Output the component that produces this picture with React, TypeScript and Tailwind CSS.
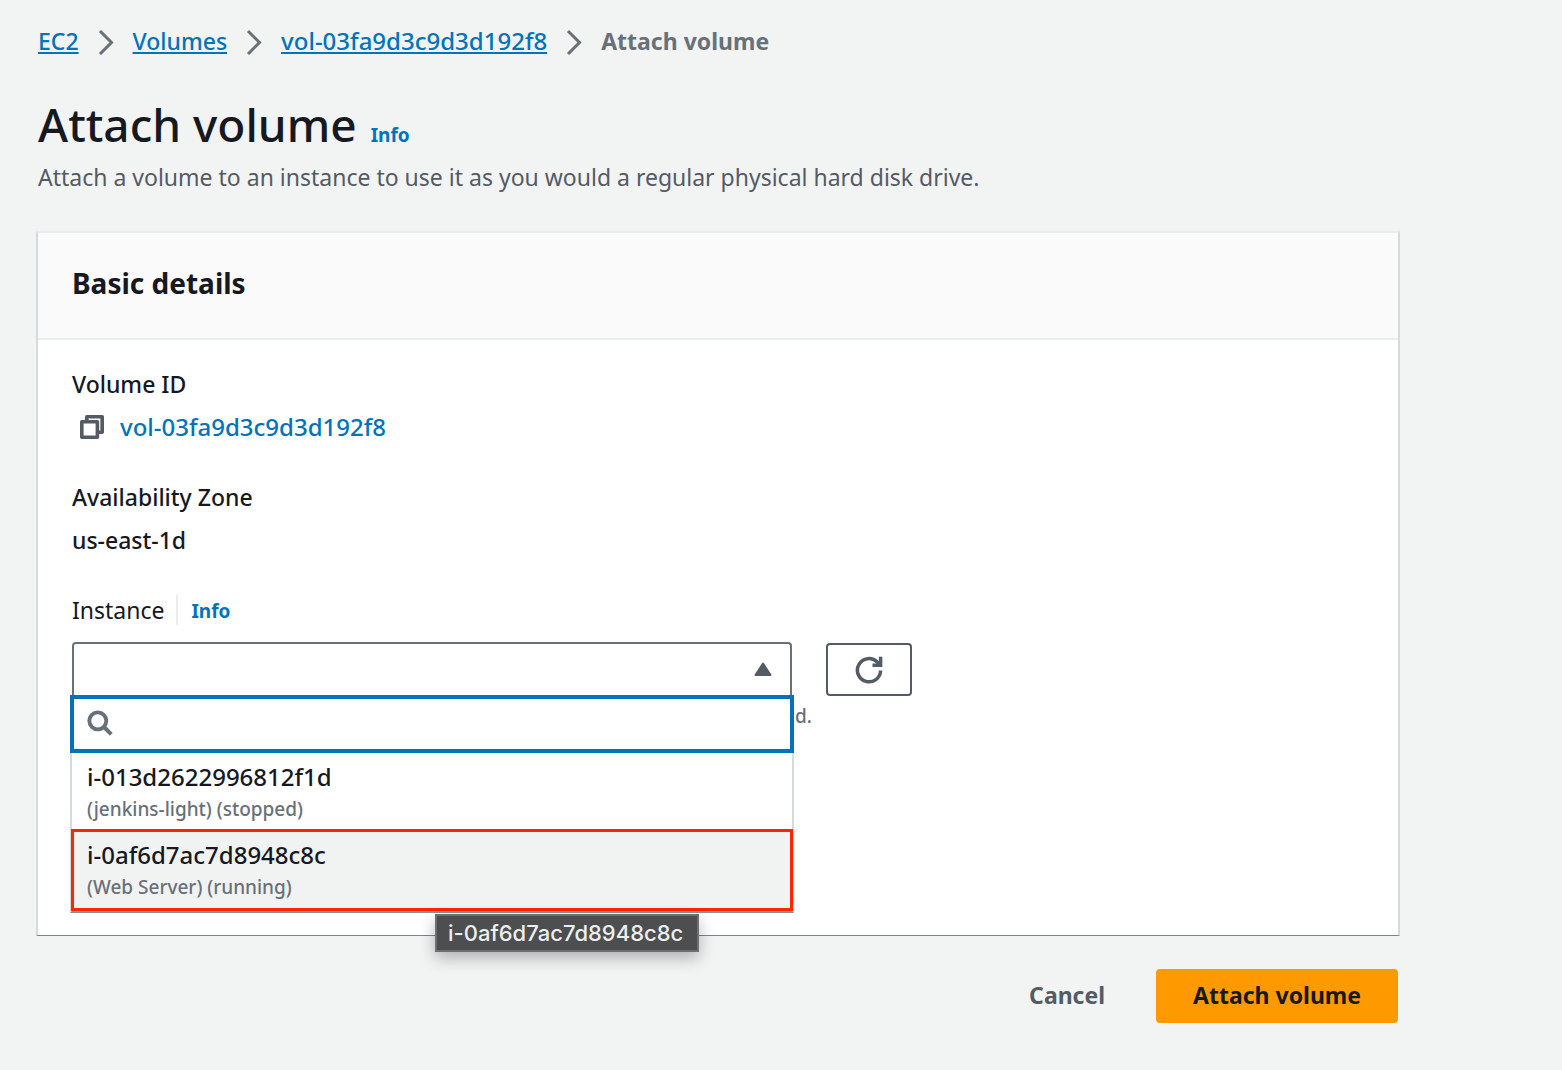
import type { ReactNode } from "react";

const instances = [
  { id: "i-013d2622996812f1d", detail: "(jenkins-light) (stopped)", highlighted: false },
  { id: "i-0af6d7ac7d8948c8c", detail: "(Web Server) (running)", highlighted: true },
];

const crumbs = [
  { label: "EC2", size: "text-[23px]" },
  { label: "Volumes", size: "text-[23px]" },
  { label: "vol-03fa9d3c9d3d192f8", size: "text-[24px]" },
];

function ChevronIcon() {
  return (
    <svg className="mt-0.5 h-7 w-4 shrink-0" viewBox="0 0 16 28" fill="none" stroke="#687078" strokeWidth="3" aria-hidden="true">
      <path d="M2 3 L13.5 14.5 L2 26" />
    </svg>
  );
}

function CopyIcon() {
  return (
    <svg className="size-6" viewBox="0 0 24 24" fill="none" stroke="#545b64" strokeWidth="3.6" strokeLinejoin="round" aria-hidden="true">
      <rect x="1.8" y="6.8" width="15.6" height="15.4" />
      <path d="M6.8 6.5 V1.8 H22.2 V17.2 H17.5" />
    </svg>
  );
}

function SearchIcon() {
  return (
    <svg className="mb-0.5 size-[26px] shrink-0" viewBox="0 0 26 26" fill="none" stroke="#687078" aria-hidden="true">
      <circle cx="10.8" cy="10.8" r="8.5" strokeWidth="3.8" />
      <path d="M17 17 L24.3 24.3" strokeWidth="4" />
    </svg>
  );
}

function RefreshIcon() {
  return (
    <svg className="size-7" viewBox="0 0 28 28" fill="none" stroke="#545b64" strokeWidth="3.5" aria-hidden="true">
      <path d="M25.6 14.5 A11.6 11.6 0 1 1 22.2 6 L24 8.2" />
      <path d="M17.5 9.2 H25.6 V0.8" />
    </svg>
  );
}

function Field({ label, children }: { label: string; children: ReactNode }) {
  return (
    <div className="flex flex-col gap-[13px]">
      <dt>{label}</dt>
      <dd>{children}</dd>
    </div>
  );
}

function InstancePicker() {
  return (
    <div className="relative w-[720px]">
      <button
        id="instance"
        type="button"
        aria-haspopup="listbox"
        aria-expanded="true"
        className="flex h-[54px] w-full items-center justify-end rounded-t-[4px] border-2 border-b-0 border-[#687078] bg-white pr-[18px]"
      >
        <svg className="mb-0.5 h-[14px] w-[18px]" viewBox="0 0 18 14" fill="#545b64" stroke="#545b64" strokeWidth="2" strokeLinejoin="round" aria-hidden="true">
          <path d="M9 1.5 L16.5 13 H1.5 Z" />
        </svg>
      </button>

      <div className="absolute top-[53px] -right-[2px] -left-[2px] z-10">
        <label className="flex h-[58px] items-center border-4 border-[#0073bb] bg-white pl-[13px]">
          <SearchIcon />
          <input type="text" aria-label="Search instances" className="ml-3 h-full min-w-0 flex-1 bg-transparent outline-none" />
        </label>
        <ul role="listbox" aria-labelledby="instance-label" className="border-x-2 border-b-2 border-x-[#d5dbdb] border-b-[#879596] bg-white">
          {instances.map((item) => (
            <li
              key={item.id}
              role="option"
              aria-selected={item.highlighted}
              className={
                item.highlighted
                  ? "-mx-px h-[82px] border-[3px] border-[#ff2600] bg-[#f1f3f3] px-[13px] pt-[7px]"
                  : "h-[76px] px-[15px] pt-2"
              }
            >
              <div className="text-[24px] leading-8">{item.id}</div>
              <div className="text-[19px] leading-8 text-[#687078]">{item.detail}</div>
            </li>
          ))}
        </ul>
        <div
          role="tooltip"
          className="absolute top-[219px] left-[365px] flex h-[38px] w-[264px] items-center border-2 border-[#6e6f70] bg-[#4d4e50] pl-[11px] font-['Inter','Liberation_Sans',sans-serif] text-[22px] whitespace-nowrap text-[#eeeeee] shadow-[0_6px_16px_rgba(0,0,0,0.28)]"
        >
          i-0af6d7ac7d8948c8c
        </div>
      </div>
    </div>
  );
}

export default function App() {
  return (
    <main className="min-h-screen bg-[#f2f3f3] pt-[26px] pr-[162px] pb-12 pl-9 font-['Noto_Sans','Liberation_Sans',sans-serif] text-[23px] leading-[30px] font-medium text-[#16191f]">
      <nav aria-label="Breadcrumb">
        <ol className="flex items-center gap-[19px] pl-0.5">
          {crumbs.map((crumb) => (
            <li key={crumb.label} className="flex items-center gap-[19px]">
              <a href="#" className={`${crumb.size} text-[#0073bb] underline decoration-2 underline-offset-2`}>
                {crumb.label}
              </a>
              <ChevronIcon />
            </li>
          ))}
          <li aria-current="page" className="font-bold text-[#687078]">
            Attach volume
          </li>
        </ol>
      </nav>

      <header className="mt-[38px] pl-0.5">
        <div className="flex items-baseline gap-[14px]">
          <h1 className="text-[46px] leading-[60px]">Attach volume</h1>
          <a href="#" className="text-[19px] font-bold text-[#0073bb]">
            Info
          </a>
        </div>
        <p className="mt-2 font-normal text-[#545b64]">
          Attach a volume to an instance to use it as you would a regular physical hard disk drive.
        </p>
      </header>

      <section className="mt-[39px] border-x-2 border-t-2 border-b border-x-[#d5dbdb] border-t-[#eaeded] border-b-[#7a8787] bg-white">
        <div className="border-b-2 border-[#eaeded] bg-[#fafafa] px-[34px] pt-[31px] pb-9">
          <h2 className="text-[28px] leading-[38px] font-bold">Basic details</h2>
        </div>
        <div className="px-[34px] pt-[29px] pb-[203px]">
          <dl className="flex flex-col gap-10">
            <Field label="Volume ID">
              <span className="flex items-center gap-4 pl-2">
                <button type="button" aria-label="Copy volume ID">
                  <CopyIcon />
                </button>
                <a href="#" className="text-[24px] text-[#0073bb]">
                  vol-03fa9d3c9d3d192f8
                </a>
              </span>
            </Field>
            <Field label="Availability Zone">us-east-1d</Field>
          </dl>
          <div className="mt-10 flex items-center">
            <label id="instance-label" htmlFor="instance" className="font-normal">
              Instance
            </label>
            <a href="#" className="ml-3 border-l-2 border-[#eaeded] pt-0.5 pl-[13px] text-[19px] leading-7 font-bold text-[#0073bb]">
              Info
            </a>
          </div>
          <div className="mt-[17px] flex gap-[34px]">
            <InstancePicker />
            <button
              type="button"
              aria-label="Refresh instances"
              className="mt-px flex h-[53px] w-[86px] items-center justify-center rounded-[4px] border-2 border-[#545b64] bg-white"
            >
              <RefreshIcon />
            </button>
          </div>
          <p className="mt-1 w-[740px] text-right text-[19px] leading-8 text-[#687078]">d.</p>
        </div>
      </section>

      <footer className="mt-[33px] flex items-center justify-end gap-[14px] pr-0.5">
        <button type="button" className="h-[54px] px-[37px] pb-0.5 font-bold text-[#545b64]">
          Cancel
        </button>
        <button type="button" className="h-[54px] rounded-[4px] bg-[#ff9900] px-[37px] pb-0.5 font-bold">
          Attach volume
        </button>
      </footer>
    </main>
  );
}
